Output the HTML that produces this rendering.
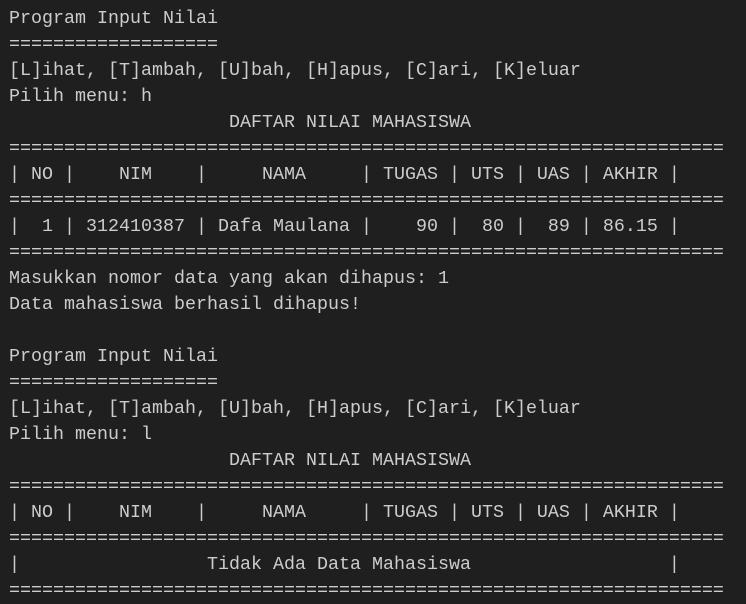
<!DOCTYPE html>
<html><head><meta charset="utf-8"><style>
html,body{margin:0;padding:0;background:#1f1f1f;width:746px;height:604px;overflow:hidden}
pre{margin:0;padding:6px 0 0 9px;font-family:"Liberation Mono",monospace;font-size:18.33px;line-height:26px;color:#cccccc;white-space:pre}
</style></head><body><pre>Program Input Nilai
===================
[L]ihat, [T]ambah, [U]bah, [H]apus, [C]ari, [K]eluar
Pilih menu: h
                    DAFTAR NILAI MAHASISWA
=================================================================
| NO |    NIM    |     NAMA     | TUGAS | UTS | UAS | AKHIR |
=================================================================
|  1 | 312410387 | Dafa Maulana |    90 |  80 |  89 | 86.15 |
=================================================================
Masukkan nomor data yang akan dihapus: 1
Data mahasiswa berhasil dihapus!

Program Input Nilai
===================
[L]ihat, [T]ambah, [U]bah, [H]apus, [C]ari, [K]eluar
Pilih menu: l
                    DAFTAR NILAI MAHASISWA
=================================================================
| NO |    NIM    |     NAMA     | TUGAS | UTS | UAS | AKHIR |
=================================================================
|                 Tidak Ada Data Mahasiswa                  |
=================================================================
</pre></body></html>
